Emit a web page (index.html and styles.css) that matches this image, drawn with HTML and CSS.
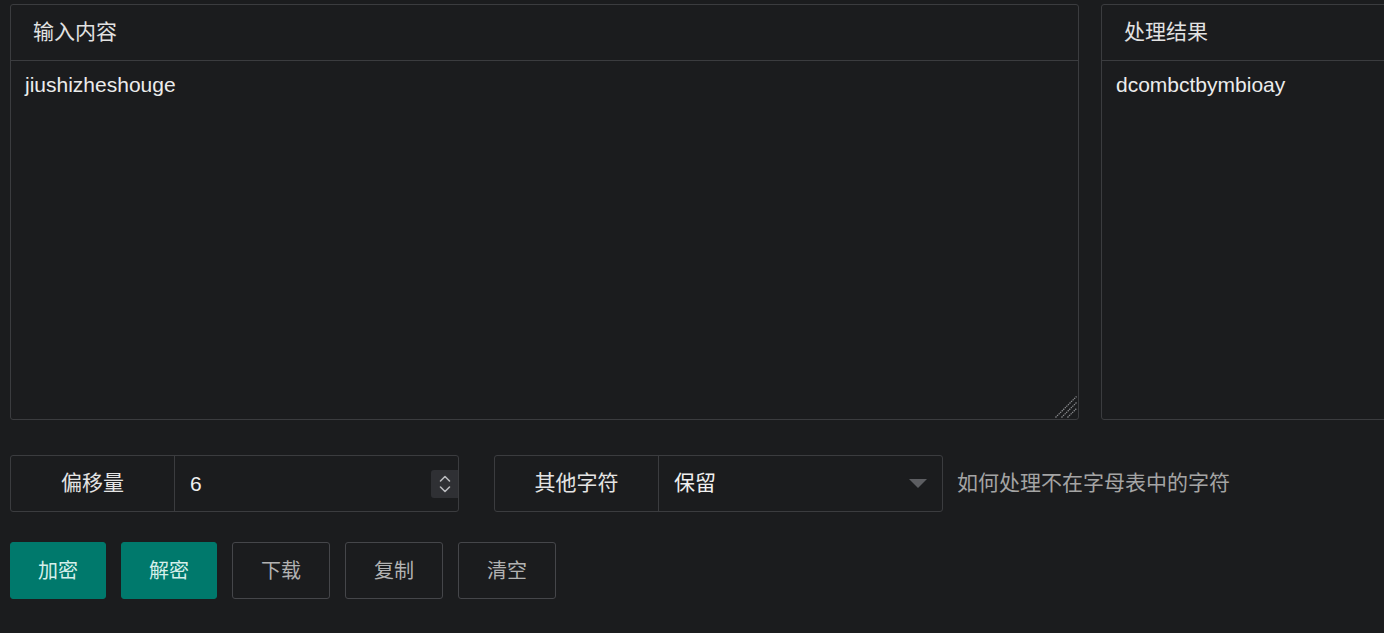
FILE: index.html
```html
<!DOCTYPE html>
<html lang="zh-CN">
<head>
<meta charset="utf-8">
<title>凯撒密码</title>
<link rel="stylesheet" href="styles.css">
</head>
<body>
<div class="page">
  <div class="panels">
    <section class="panel">
      <div class="panel-head">输入内容</div>
      <textarea class="panel-body input-area" spellcheck="false">jiushizheshouge</textarea>
      <svg class="grip" width="22" height="22" viewBox="0 0 22 22" stroke="#8c8d90" stroke-width="1.2" stroke-dasharray="1.4 0.8">
        <path d="M0.5 21.5 L21.5 0.5"/>
        <path d="M6.5 21.5 L21.5 6.5"/>
        <path d="M12.5 21.5 L21.5 12.5"/>
      </svg>
    </section>
    <section class="panel">
      <div class="panel-head">处理结果</div>
      <div class="panel-body output-area">dcombctbymbioay</div>
    </section>
  </div>

  <div class="options">
    <div class="group">
      <div class="group-label">偏移量</div>
      <div class="group-field">
        <span class="field-value">6</span>
        <span class="spinner">
          <svg width="14" height="22" viewBox="0 0 14 22" fill="none" stroke="#b9babd" stroke-width="1.6" stroke-linecap="round" stroke-linejoin="round">
            <path d="M2.5 8 L7 3.5 L11.5 8"/>
            <path d="M2.5 14 L7 18.5 L11.5 14"/>
          </svg>
        </span>
      </div>
    </div>
    <div class="group">
      <div class="group-label">其他字符</div>
      <div class="group-field select">
        <span class="field-value cjk">保留</span>
        <span class="caret"></span>
      </div>
    </div>
    <div class="hint">如何处理不在字母表中的字符</div>
  </div>

  <div class="actions">
    <button class="btn btn-primary">加密</button>
    <button class="btn btn-primary">解密</button>
    <button class="btn btn-outline">下载</button>
    <button class="btn btn-outline">复制</button>
    <button class="btn btn-outline">清空</button>
  </div>
</div>
</body>
</html>
```

FILE: styles.css
```css
html, body {
  margin: 0;
  padding: 0;
  background: #1b1c1e;
  overflow: hidden;
  color-scheme: dark;
}

body {
  font-family: "Liberation Sans", "Noto Sans CJK SC", sans-serif;
  font-size: 21px;
  color: #e6e6e6;
}

.page {
  padding: 4px 0 0 10px;
  width: 2400px;
}

.panels {
  display: flex;
  gap: 22px;
  height: 416px;
}

.panel {
  position: relative;
  width: 1069px;
  flex: none;
  box-sizing: border-box;
  border: 1px solid #3b3c3f;
  border-radius: 3px;
  display: flex;
  flex-direction: column;
  background: #1b1c1e;
}

.panel-head {
  height: 56px;
  flex: none;
  box-sizing: border-box;
  border-bottom: 1px solid #3b3c3f;
  padding: 0 22px 5px;
  display: flex;
  align-items: center;
  font-size: 21px;
  color: #e2e2e2;
}

.panel-body {
  flex: 1;
  min-height: 0;
  box-sizing: border-box;
  padding: 10px 14px;
  font-family: "Liberation Sans", "Noto Sans CJK SC", sans-serif;
  font-size: 21px;
  line-height: 27px;
  color: #ececec;
}

.input-area {
  background: transparent;
  border: none;
  outline: none;
  resize: none;
  margin: 0;
  width: 100%;
}

.grip {
  position: absolute;
  right: 1px;
  bottom: 1px;
}

.options {
  display: flex;
  align-items: center;
  margin-top: 35px;
  height: 57px;
}

.group {
  display: flex;
  width: 449px;
  height: 57px;
  box-sizing: border-box;
  border: 1px solid #3b3c3f;
  border-radius: 3px;
  margin-right: 35px;
}

.group + .group {
  margin-right: 14px;
}

.group-label {
  width: 164px;
  flex: none;
  box-sizing: border-box;
  padding-bottom: 5px;
  border-right: 1px solid #3b3c3f;
  display: flex;
  align-items: center;
  justify-content: center;
  color: #e4e4e4;
}

.group-field {
  flex: 1;
  display: flex;
  align-items: center;
  justify-content: space-between;
  padding-left: 15px;
  color: #f0f0f0;
}

.cjk {
  padding-bottom: 5px;
}

.spinner {
  width: 27px;
  height: 28px;
  background: #2f3034;
  border-radius: 3px 0 0 3px;
  display: flex;
  align-items: center;
  justify-content: center;
}

.select {
  padding-right: 15px;
}

.caret {
  width: 0;
  height: 0;
  border-left: 9px solid transparent;
  border-right: 9px solid transparent;
  border-top: 9px solid #5d5e62;
}

.hint {
  color: #a4a4a4;
  font-size: 21px;
  padding-bottom: 5px;
}

.actions {
  display: flex;
  gap: 15px;
  margin-top: 30px;
}

.btn {
  width: 96px;
  height: 57px;
  box-sizing: border-box;
  border-radius: 3px;
  font-family: "Liberation Sans", "Noto Sans CJK SC", sans-serif;
  font-size: 20px;
  padding: 0 0 2px;
  cursor: pointer;
}

.btn-outline {
  width: 98px;
  background: transparent;
  border: 1px solid #45464a;
  color: #b2b2b2;
}

.btn-primary {
  background: #00796c;
  border: 1px solid #00796c;
  color: #d5efea;
}
```
